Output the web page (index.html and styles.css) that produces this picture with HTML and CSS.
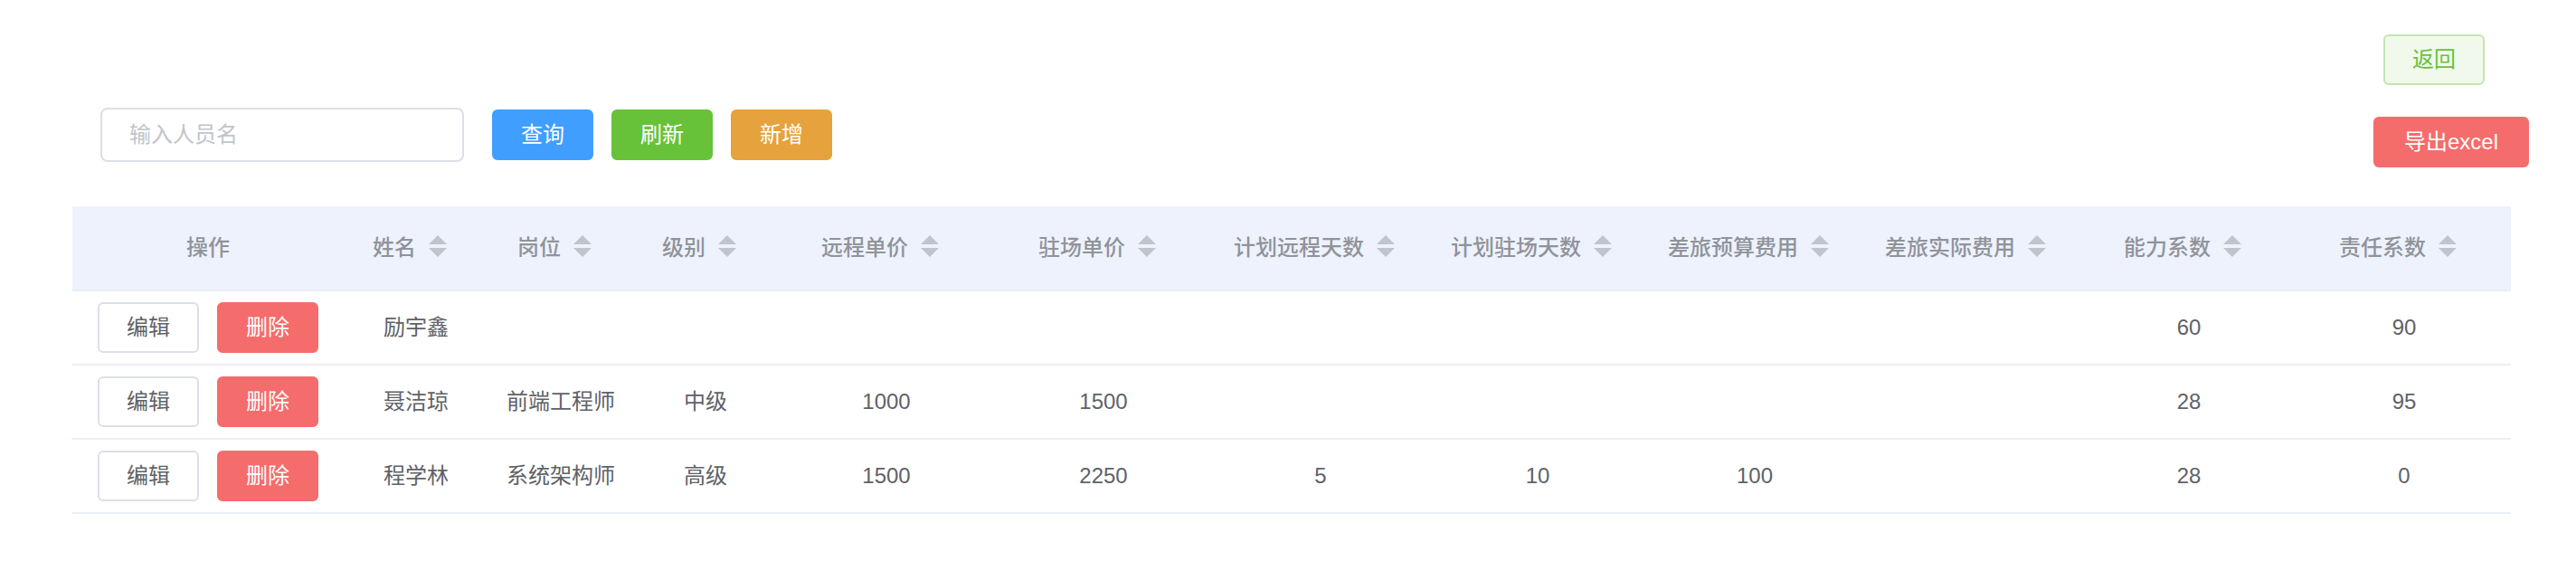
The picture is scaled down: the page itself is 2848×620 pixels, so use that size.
FILE: index.html
```html
<!DOCTYPE html>
<html lang="zh-CN">
<head>
<meta charset="utf-8">
<title>人员管理</title>
<link rel="stylesheet" href="styles.css">
</head>
<body>
<div class="page">
  <div class="topbar">
    <button class="btn btn-plain-success">返回</button>
  </div>
  <div class="toolbar">
    <div class="toolbar-left">
      <input class="search" type="text" placeholder="输入人员名">
      <button class="btn btn-primary">查询</button>
      <button class="btn btn-success">刷新</button>
      <button class="btn btn-warning">新增</button>
    </div>
    <button class="btn btn-danger btn-export">导出excel</button>
  </div>
  <table class="grid">
    <colgroup>
      <col class="c-op"><col class="c-s"><col class="c-s"><col class="c-s">
      <col class="c-m"><col class="c-m"><col class="c-m"><col class="c-m">
      <col class="c-m"><col class="c-m"><col class="c-m"><col>
    </colgroup>
    <thead>
      <tr>
        <th><div class="cell">操作</div></th>
        <th><div class="cell">姓名<span class="caret"><i class="up"></i><i class="down"></i></span></div></th>
        <th><div class="cell">岗位<span class="caret"><i class="up"></i><i class="down"></i></span></div></th>
        <th><div class="cell">级别<span class="caret"><i class="up"></i><i class="down"></i></span></div></th>
        <th><div class="cell">远程单价<span class="caret"><i class="up"></i><i class="down"></i></span></div></th>
        <th><div class="cell">驻场单价<span class="caret"><i class="up"></i><i class="down"></i></span></div></th>
        <th><div class="cell">计划远程天数<span class="caret"><i class="up"></i><i class="down"></i></span></div></th>
        <th><div class="cell">计划驻场天数<span class="caret"><i class="up"></i><i class="down"></i></span></div></th>
        <th><div class="cell">差旅预算费用<span class="caret"><i class="up"></i><i class="down"></i></span></div></th>
        <th><div class="cell">差旅实际费用<span class="caret"><i class="up"></i><i class="down"></i></span></div></th>
        <th><div class="cell">能力系数<span class="caret"><i class="up"></i><i class="down"></i></span></div></th>
        <th><div class="cell">责任系数<span class="caret"><i class="up"></i><i class="down"></i></span></div></th>
      </tr>
    </thead>
    <tbody>
      <tr>
        <td><div class="cell ops"><button class="btn btn-default">编辑</button><button class="btn btn-danger">删除</button></div></td>
        <td><div class="cell">励宇鑫</div></td>
        <td><div class="cell"></div></td>
        <td><div class="cell"></div></td>
        <td><div class="cell"></div></td>
        <td><div class="cell"></div></td>
        <td><div class="cell"></div></td>
        <td><div class="cell"></div></td>
        <td><div class="cell"></div></td>
        <td><div class="cell"></div></td>
        <td><div class="cell">60</div></td>
        <td><div class="cell">90</div></td>
      </tr>
      <tr>
        <td><div class="cell ops"><button class="btn btn-default">编辑</button><button class="btn btn-danger">删除</button></div></td>
        <td><div class="cell">聂洁琼</div></td>
        <td><div class="cell">前端工程师</div></td>
        <td><div class="cell">中级</div></td>
        <td><div class="cell">1000</div></td>
        <td><div class="cell">1500</div></td>
        <td><div class="cell"></div></td>
        <td><div class="cell"></div></td>
        <td><div class="cell"></div></td>
        <td><div class="cell"></div></td>
        <td><div class="cell">28</div></td>
        <td><div class="cell">95</div></td>
      </tr>
      <tr>
        <td><div class="cell ops"><button class="btn btn-default">编辑</button><button class="btn btn-danger">删除</button></div></td>
        <td><div class="cell">程学林</div></td>
        <td><div class="cell">系统架构师</div></td>
        <td><div class="cell">高级</div></td>
        <td><div class="cell">1500</div></td>
        <td><div class="cell">2250</div></td>
        <td><div class="cell">5</div></td>
        <td><div class="cell">10</div></td>
        <td><div class="cell">100</div></td>
        <td><div class="cell"></div></td>
        <td><div class="cell">28</div></td>
        <td><div class="cell">0</div></td>
      </tr>
    </tbody>
  </table>
</div>
</body>
</html>
```
FILE: styles.css
```css
html, body {
  margin: 0;
  padding: 0;
  background: #ffffff;
}
body {
  font-family: "Liberation Sans", "Noto Sans CJK SC", sans-serif;
  font-size: 24px;
  color: #606266;
}
.page {
  padding: 38px 0 0 80px;
}
.topbar {
  display: flex;
  justify-content: flex-end;
  padding-right: 101px;
}
.toolbar {
  display: flex;
  justify-content: space-between;
  align-items: flex-start;
  margin-top: 25px;
  padding-left: 31px;
  padding-right: 52px;
}
.toolbar-left {
  display: flex;
  align-items: center;
  gap: 20px;
}
.search {
  box-sizing: border-box;
  width: 402px;
  height: 60px;
  border: 2px solid #dcdfe6;
  border-radius: 8px;
  padding: 0 30px;
  font-family: inherit;
  font-size: 24px;
  color: #606266;
  outline: none;
  margin-right: 11px;
}
.search::placeholder {
  color: #c0c4cc;
}
.btn {
  box-sizing: border-box;
  height: 56px;
  padding: 0 30px;
  border: 2px solid transparent;
  border-radius: 6px;
  font-family: inherit;
  font-size: 24px;
  line-height: 1;
  color: #ffffff;
  cursor: pointer;
  white-space: nowrap;
}
.btn-primary { background: #409eff; border-color: #409eff; }
.btn-success { background: #67c23a; border-color: #67c23a; }
.btn-warning { background: #e6a23c; border-color: #e6a23c; }
.btn-danger { background: #f56c6c; border-color: #f56c6c; }
.btn-default { background: #ffffff; border-color: #dcdfe6; color: #606266; }
.btn-plain-success { background: #f0f9eb; border-color: #c2e7b0; color: #67c23a; }
.btn-export {
  margin-top: 10px;
  padding: 0 32px;
}
.grid {
  margin-top: 43px;
  width: 2696px;
  border-collapse: collapse;
  table-layout: fixed;
}
.c-op { width: 300px; }
.c-s { width: 160px; }
.c-m { width: 240px; }
.grid th, .grid td {
  padding: 12px 0;
  text-align: center;
  border-bottom: 2px solid #ebeef5;
  vertical-align: middle;
}
.grid thead th {
  background: #edf2fd;
  color: #909399;
  font-weight: 500;
}
.cell {
  padding: 0 20px;
  line-height: 46px;
  white-space: nowrap;
  display: flex;
  justify-content: center;
  align-items: center;
}
.ops {
  gap: 20px;
}
.caret {
  position: relative;
  display: inline-block;
  width: 48px;
  height: 68px;
  flex: none;
}
.caret i {
  position: absolute;
  left: 14px;
  width: 0;
  height: 0;
  border: 10px solid transparent;
}
.caret .up {
  top: 10px;
  border-bottom-color: #c0c4cc;
}
.caret .down {
  bottom: 14px;
  border-top-color: #c0c4cc;
}
```
